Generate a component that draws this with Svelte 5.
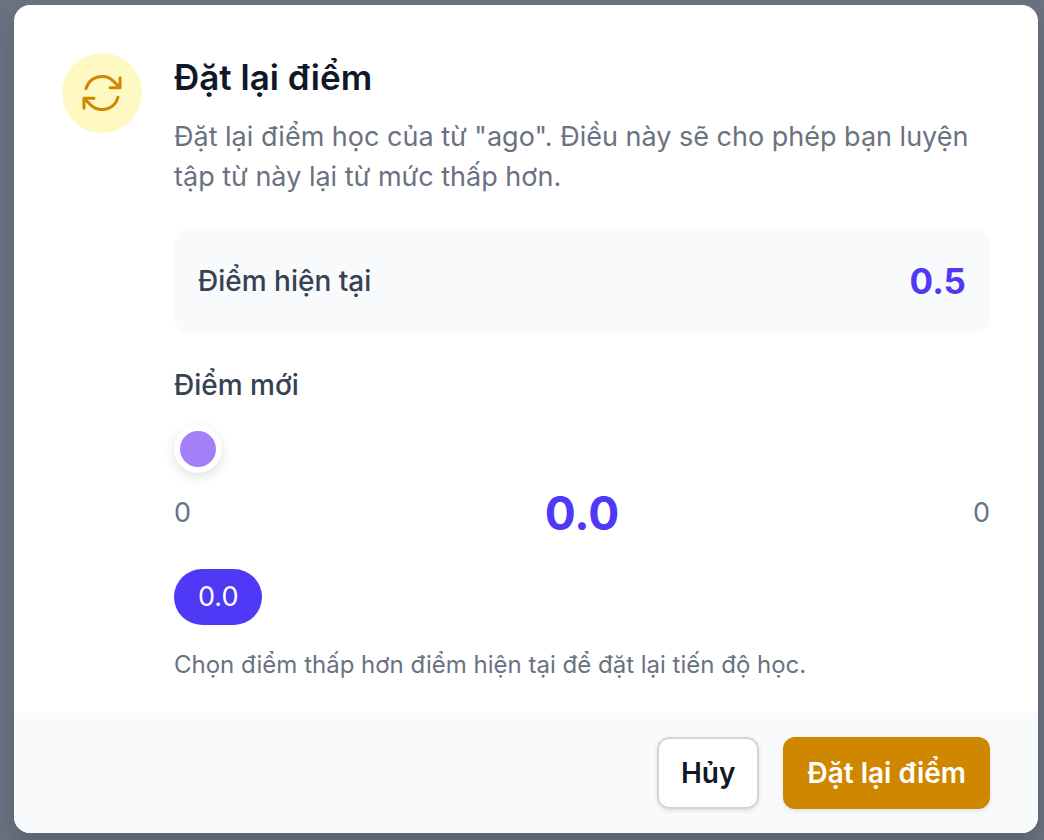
<script lang="ts">
    let currentScore = $state(0.5);
    let newScore = $state(0);
    const maxScore = 0;
    const presets = [0];
</script>

<div class="backdrop">
    <div class="dialog" role="dialog" aria-modal="true" aria-labelledby="dialog-title">
        <div class="body">
            <div class="icon">
                <svg viewBox="0 0 24 24" fill="none" stroke="currentColor" stroke-width="1.5" stroke-linecap="round" stroke-linejoin="round" aria-hidden="true">
                    <path d="M16.023 9.348h4.992v-.001M2.985 19.644v-4.992m0 0h4.992m-4.993 0 3.181 3.183a8.25 8.25 0 0 0 13.803-3.7M4.031 9.865a8.25 8.25 0 0 1 13.803-3.7l3.181 3.182m0-4.991v4.99" />
                </svg>
            </div>
            <div class="content">
                <h3 id="dialog-title">Đặt lại điểm</h3>
                <p class="description">Đặt lại điểm học của từ "ago". Điều này sẽ cho phép bạn luyện tập từ này lại từ mức thấp hơn.</p>

                <div class="current">
                    <span class="current-label">Điểm hiện tại</span>
                    <span class="current-value">{currentScore.toFixed(1)}</span>
                </div>

                <label for="new-score">Điểm mới</label>
                <input id="new-score" type="range" min="0" max={maxScore} step="0.1" bind:value={newScore} />
                <div class="scale">
                    <span>0</span>
                    <span class="new-value">{newScore.toFixed(1)}</span>
                    <span>{maxScore}</span>
                </div>

                <div class="presets">
                    {#each presets as preset}
                        <button
                            type="button"
                            class="preset"
                            class:active={newScore === preset}
                            onclick={() => (newScore = preset)}
                        >{preset.toFixed(1)}</button>
                    {/each}
                </div>

                <p class="hint">Chọn điểm thấp hơn điểm hiện tại để đặt lại tiến độ học.</p>
            </div>
        </div>
        <div class="footer">
            <button type="button" class="cancel">Hủy</button>
            <button type="button" class="confirm">Đặt lại điểm</button>
        </div>
    </div>
</div>

<style>
    :global(body) {
        margin: 0;
        background: #6a7282;
    }

    .backdrop {
        box-sizing: border-box;
        min-height: 100vh;
        padding: 5px 6px 7px 14px;
        background: #6a7282;
        font-family: Inter, "Noto Sans", sans-serif;
        -webkit-font-smoothing: antialiased;
    }

    .dialog {
        overflow: hidden;
        border-radius: 16px;
        background: #fff;
        box-shadow: 0 16px 24px rgba(0, 0, 0, 0.15);
    }

    .body {
        display: flex;
        gap: 32px;
        padding: 48px 48px 32px;
    }

    .icon {
        display: flex;
        flex: none;
        align-items: center;
        justify-content: center;
        width: 80px;
        height: 80px;
        border-radius: 50%;
        background: #fef9c2;
        color: #d08700;
    }

    .icon svg {
        width: 48px;
        height: 48px;
    }

    .content {
        flex: 1;
        min-width: 0;
    }

    h3 {
        margin: 0;
        color: #101828;
        font-size: 35px;
        font-weight: 600;
        line-height: 48px;
    }

    .description {
        margin: 16px 0 0;
        color: #6a7282;
        font-size: 27px;
        line-height: 40px;
    }

    .current {
        display: flex;
        align-items: center;
        justify-content: space-between;
        margin-top: 32px;
        padding: 24px;
        border-radius: 16px;
        background: #f9fafb;
    }

    .current-label,
    label {
        color: #364153;
        font-size: 28px;
        font-weight: 500;
        line-height: 40px;
    }

    .current-value {
        color: #4f39f6;
        font-size: 35px;
        font-weight: 700;
        line-height: 56px;
    }

    label {
        display: block;
        margin-top: 32px;
    }

    input {
        display: block;
        width: 100%;
        height: 48px;
        margin: 20px 0 0;
        appearance: none;
        background: transparent;
        cursor: pointer;
    }

    input::-webkit-slider-thumb {
        box-sizing: border-box;
        width: 48px;
        height: 48px;
        appearance: none;
        border: 6px solid #fff;
        border-radius: 50%;
        background: #a57ff8;
        box-shadow: 0 4px 12px rgba(0, 0, 0, 0.12);
    }

    .scale {
        display: flex;
        align-items: center;
        justify-content: space-between;
        margin-top: 8px;
        color: #6a7282;
        font-size: 27px;
        line-height: 40px;
    }

    .new-value {
        color: #4f39f6;
        font-size: 46px;
        font-weight: 700;
        line-height: 64px;
    }

    .presets {
        display: flex;
        gap: 16px;
        margin-top: 24px;
    }

    button {
        margin: 0;
        font-family: inherit;
        font-size: 28px;
        line-height: 40px;
        cursor: pointer;
    }

    .preset {
        padding: 8px 24px;
        border: 0;
        border-radius: 28px;
        background: #f3f4f6;
        color: #364153;
        font-size: 27px;
    }

    .preset.active {
        background: #4f39f6;
        color: #fff;
    }

    .hint {
        margin: 24px 0 0;
        color: #6a7282;
        font-size: 24px;
        line-height: 32px;
    }

    .footer {
        display: flex;
        justify-content: flex-end;
        gap: 24px;
        padding: 24px 48px;
        background: #f9fafb;
    }

    .cancel,
    .confirm {
        padding: 16px 24px;
        border: 0;
        border-radius: 12px;
        font-weight: 600;
    }

    .cancel {
        background: #fff;
        box-shadow: inset 0 0 0 2px #d1d5dc, 0 2px 4px rgba(0, 0, 0, 0.1);
        color: #101828;
    }

    .confirm {
        background: #d08700;
        box-shadow: 0 2px 4px rgba(0, 0, 0, 0.1);
        color: #fff;
    }
</style>
